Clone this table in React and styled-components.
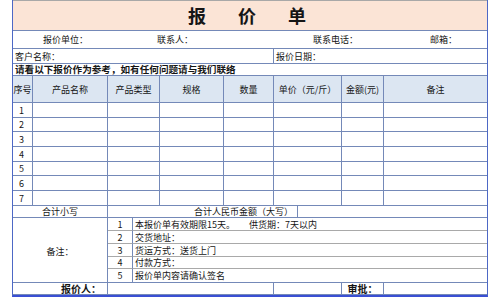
import React from 'react';
import styled, { createGlobalStyle } from 'styled-components';

const LINE = '#7489b8';
const SOFT = '#a9a9a9';

const GlobalStyle = createGlobalStyle`
    body {
        margin: 0;
        background: #fff;
        font-family: "Noto Sans CJK SC", "Noto Sans", sans-serif;
        color: #151515;
    }
`

const Sheet = styled.div`
    box-sizing: border-box;
    width: 476px;
    margin-left: 12px;
    border-left: 1px solid #4d68c6;
    border-right: 1px solid #4d68c6;
    border-bottom: 2px solid #3a4fd3;
`

const Title = styled.div`
    box-sizing: border-box;
    height: 31px;
    display: flex;
    justify-content: center;
    align-items: center;
    gap: 32px;
    padding: 0 6px 1px 0;
    background: #fbe4d6;
    border-top: 1px solid #a8a8a8;
    border-bottom: 1px solid ${LINE};
    span {
        font-size: 18px;
        font-weight: 700;
        line-height: 1;
    }
`

const Row = styled.div`
    box-sizing: border-box;
    display: grid;
    grid-template-columns: ${({ $cols }) => $cols};
    height: ${({ $h }) => $h}px;
    padding-left: ${({ $pad }) => $pad || 0}px;
    background: ${({ $bg }) => $bg || 'transparent'};
    border-bottom: 1px solid ${LINE};
    font-size: ${({ $size }) => $size || 9}px;
    font-weight: ${({ $bold }) => ($bold ? 700 : 400)};
`

const Cell = styled.div`
    box-sizing: border-box;
    display: flex;
    align-items: ${({ $bottom }) => ($bottom ? 'flex-end' : 'center')};
    justify-content: ${({ $align }) =>
        $align === 'left' ? 'flex-start' : $align === 'right' ? 'flex-end' : 'center'};
    padding: 0 ${({ $pr }) => $pr || 0}px 0 ${({ $pl }) => $pl || 0}px;
    border-right: 1px solid ${LINE};
    line-height: 1;
    white-space: nowrap;
    &:last-child {
        border-right: none;
    }
`

const Label = styled.div`
    display: flex;
    align-items: center;
    font-size: 9px;
    line-height: 1;
    white-space: nowrap;
`

const Notes = styled.div`
    display: grid;
    grid-template-columns: 95px 25px 1fr;
    grid-template-rows: 13px 13px 13px 12px 13px;
    border-bottom: 1px solid ${LINE};
    font-size: 9px;
`

const NoteLabel = styled.div`
    grid-row: 1 / 6;
    display: flex;
    align-items: center;
    justify-content: center;
    padding-top: 2px;
    border-right: 1px solid ${LINE};
`

const NoteCell = styled.div`
    box-sizing: border-box;
    display: flex;
    align-items: center;
    justify-content: ${({ $num }) => ($num ? 'center' : 'flex-start')};
    padding-left: ${({ $num }) => ($num ? 0 : 2)}px;
    border-right: ${({ $num }) => ($num ? `1px solid ${LINE}` : 'none')};
    border-bottom: ${({ $last }) => ($last ? 'none' : `1px solid ${SOFT}`)};
    line-height: 1;
    white-space: nowrap;
    span.gap {
        margin-left: 14px;
    }
`

const TABLE_COLS = '20px 75px 52px 64px 50px 68px 42px 1fr';
const headers = ['序号', '产品名称', '产品类型', '规格', '数量', '单价（元/斤）', '金额(元)', '备注'];
const rowHeights = [15, 14, 15, 15, 14, 15, 15];
const notes = [
    ['本报价单有效期限15天。', '供货期：7天以内'],
    ['交货地址：'],
    ['货运方式：送货上门'],
    ['付款方式：'],
    ['报价单内容请确认签名'],
];

const App = () => {
    return (
        <>
            <GlobalStyle />
            <Sheet>
                <Title>
                    <span>报</span>
                    <span>价</span>
                    <span>单</span>
                </Title>
                <Row $h={18} $pad={30} $cols="114px 156px 117px 1fr">
                    <Label>报价单位：</Label>
                    <Label>联系人：</Label>
                    <Label>联系电话：</Label>
                    <Label>邮箱：</Label>
                </Row>
                <Row $h={15} $cols="261px 1fr">
                    <Cell $align="left" $pl={2}>客户名称：</Cell>
                    <Cell $align="left" $pl={2}>报价日期：</Cell>
                </Row>
                <Row $h={12} $cols="1fr" $size={9.6} $bold>
                    <Cell $align="left" $pl={2}>请看以下报价作为参考，如有任何问题请与我们联络</Cell>
                </Row>
                <Row $h={27} $cols={TABLE_COLS} $bg="#dce6f2">
                    {headers.map((h) => (
                        <Cell key={h}>{h}</Cell>
                    ))}
                </Row>
                {rowHeights.map((h, i) => (
                    <Row key={i} $h={h} $cols={TABLE_COLS}>
                        <Cell $align="left" $pl={6}>{i + 1}</Cell>
                        {headers.slice(1).map((c) => (
                            <Cell key={c} />
                        ))}
                    </Row>
                ))}
                <Row $h={12} $cols="95px 190px 1fr">
                    <Cell>合计小写</Cell>
                    <Cell $align="right" $pr={4}>合计人民币金额（大写）</Cell>
                    <Cell />
                </Row>
                <Notes>
                    <NoteLabel>备注：</NoteLabel>
                    {notes.map((n, i) => (
                        <React.Fragment key={i}>
                            <NoteCell $num $last={i === notes.length - 1}>{i + 1}</NoteCell>
                            <NoteCell $last={i === notes.length - 1}>
                                {n[0]}
                                {n[1] && <span className="gap">{n[1]}</span>}
                            </NoteCell>
                        </React.Fragment>
                    ))}
                </Notes>
                <Row $h={12} $cols="95px 166px 68px 42px 1fr" $size={10} $bold>
                    <Cell $align="right" $pr={6}>报价人：</Cell>
                    <Cell />
                    <Cell />
                    <Cell>审批：</Cell>
                    <Cell />
                </Row>
            </Sheet>
        </>
    );
};

export default App;
